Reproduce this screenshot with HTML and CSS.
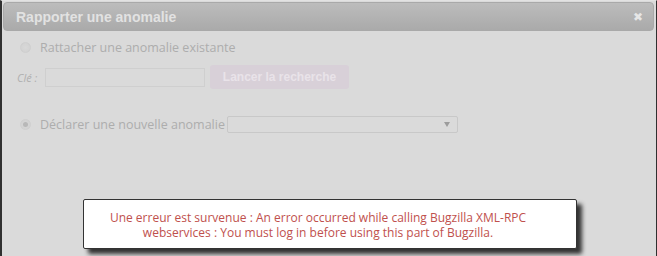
FILE: index.html
```html
<!DOCTYPE html>
<html>
<head>
<meta charset="utf-8">
<link rel="stylesheet" href="styles.css">
</head>
<body>
<div class="frame">
  <div class="dialog">
    <div class="titlebar">
      <span class="title">Rapporter une anomalie</span>
      <span class="close">&#x2716;</span>
    </div>
    <div class="content">
      <div class="row radio-row first">
        <span class="radio"></span>
        <span class="label">Rattacher une anomalie existante</span>
      </div>
      <div class="row key-row">
        <span class="key">Clé :</span>
        <span class="input"></span>
        <span class="button">Lancer la recherche</span>
      </div>
      <div class="row radio-row second">
        <span class="radio checked"></span>
        <span class="label">Déclarer une nouvelle anomalie</span>
        <span class="select"><span class="arrow"></span></span>
      </div>
      <div class="error-wrap">
        <div class="error">Une erreur est survenue : An error occurred while calling Bugzilla XML-RPC webservices : You must log in before using this part of Bugzilla.</div>
      </div>
    </div>
  </div>
</div>
</body>
</html>
```
FILE: styles.css
```css
html, body {
  margin: 0;
  padding: 0;
}
body {
  width: 657px;
  height: 256px;
  background: #dadada;
  overflow: hidden;
  font-family: "Open Sans", "Liberation Sans", sans-serif;
}
.frame {
  height: 256px;
  border-left: 2px solid #303030;
  border-right: 1px solid #303030;
  border-top: 1px solid #e2e2e2;
  box-sizing: border-box;
}
.dialog {
  padding: 1px 2px 0 1px;
}
.titlebar {
  height: 27px;
  border: 1px solid #a9a9a9;
  border-radius: 4px;
  background: linear-gradient(#bcbcbc, #aaaaaa);
  display: flex;
  align-items: center;
  justify-content: space-between;
  padding: 0 10px 0 12px;
}
.title {
  font-family: "Liberation Sans", Arial, sans-serif;
  font-weight: bold;
  font-size: 14px;
  color: #e2e2e2;
}
.close {
  color: #e6e6e6;
  font-size: 12px;
  font-family: "DejaVu Sans", sans-serif;
  font-weight: bold;
}
.content {
  padding: 0 0 0 13px;
}
.row {
  display: flex;
  align-items: center;
}
.radio-row.first {
  margin-top: 7px;
  height: 18px;
}
.radio {
  width: 11px;
  height: 11px;
  border-radius: 50%;
  border: 1px solid #cfcfcf;
  background: radial-gradient(#d8d8d8, #d0d0d0);
  margin: 0 9px 0 4px;
  box-sizing: border-box;
  position: relative;
}
.radio.checked::after {
  content: "";
  position: absolute;
  left: 2px;
  top: 2px;
  width: 5px;
  height: 5px;
  border-radius: 50%;
  background: #b8b8b8;
}
.label {
  font-size: 12.5px;
  color: #adadad;
}
.key-row {
  margin-top: 8px;
  height: 26px;
}
.key {
  font-style: italic;
  font-size: 11px;
  color: #b0b0b0;
  width: 28px;
  margin-left: 1px;
}
.input {
  width: 160px;
  height: 19px;
  border: 1px solid #cfcfcf;
  box-sizing: border-box;
  background: #dadada;
}
.button {
  margin-left: 5px;
  width: 139px;
  height: 24px;
  border-radius: 3px;
  background: #d8d0d8;
  color: #e9e3e9;
  font-family: "Liberation Sans", Arial, sans-serif;
  font-weight: bold;
  font-size: 12px;
  display: flex;
  align-items: center;
  justify-content: center;
}
.radio-row.second {
  margin-top: 25px;
  height: 18px;
}
.select {
  margin-left: 2px;
  width: 231px;
  height: 17px;
  border: 1px solid #c8c8c8;
  border-radius: 2px;
  box-sizing: border-box;
  position: relative;
}
.arrow {
  position: absolute;
  right: 7px;
  top: 5px;
  border-left: 3px solid transparent;
  border-right: 3px solid transparent;
  border-top: 5px solid #9c9c9c;
}
.error-wrap {
  margin-top: 66px;
  padding-left: 67px;
}
.error {
  width: 494px;
  height: 50px;
  box-sizing: border-box;
  background: #fff;
  border: 1px solid #333;
  border-radius: 2px;
  box-shadow: 5px 5px 4px #333;
  color: #c0504d;
  font-size: 12px;
  text-align: center;
  padding: 10px 36px 0 12px;
  line-height: 15px;
}
```
